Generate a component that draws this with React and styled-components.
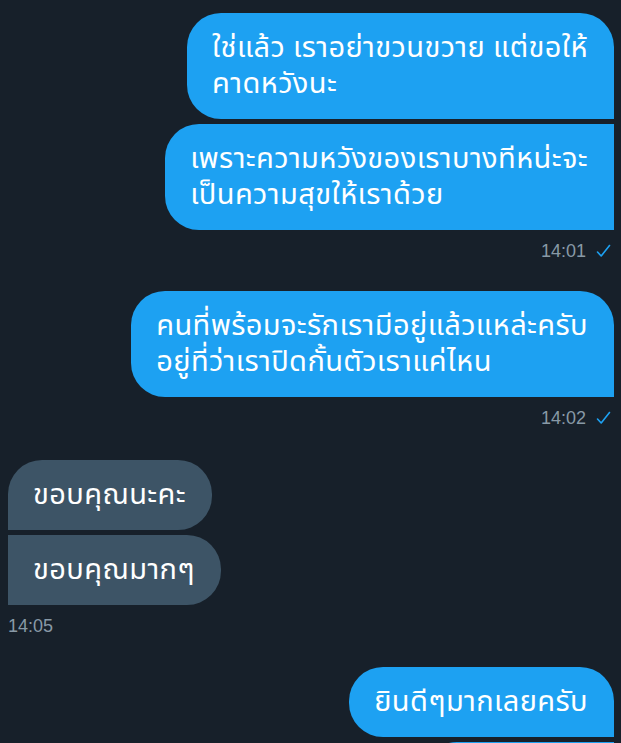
import React from "react";
import styled, { createGlobalStyle } from "styled-components";

const Global = createGlobalStyle`
  html, body { margin: 0; padding: 0; background: #17202a; }
  body { font-family: "Noto Sans Thai", "Noto Sans", "Liberation Sans", sans-serif; }
`;

const Thread = styled.div`
  display: flex;
  flex-direction: column;
  padding: 13px 7px 0 8px;
  height: 743px;
  box-sizing: border-box;
  overflow: hidden;
`;

const Group = styled.div`
  display: flex;
  flex-direction: column;
  align-items: ${(p) => (p.$mine ? "flex-end" : "flex-start")};
  gap: 5px;
  margin-top: ${(p) => p.$mt || 0}px;
`;

const Bubble = styled.div`
  background: ${(p) => (p.$mine ? "#1da1f2" : "#3d5466")};
  color: #ffffff;
  font-size: 29px;
  line-height: 36px;
  letter-spacing: 0.4px;
  padding: 17px 26px 17px 25px;
  white-space: nowrap;
  min-height: ${(p) => (p.$empty ? "36px" : "0")};
  min-width: ${(p) => (p.$empty ? "140px" : "0")};
  border-radius: ${(p) =>
    p.$mine
      ? `34px ${p.$first ? "34px" : "0"} 0 34px`
      : `${p.$first ? "34px" : "0"} 34px 34px 0`};
`;

const Line = styled.div``;

const Stamp = styled.div`
  display: flex;
  align-items: center;
  gap: 10px;
  align-self: ${(p) => (p.$mine ? "flex-end" : "flex-start")};
  margin-top: 4px;
  color: #8899a6;
  font-family: "Liberation Sans", Arial, sans-serif;
  font-size: 18px;
  line-height: 24px;
  padding-right: ${(p) => (p.$mine ? 3 : 0)}px;
`;

const Check = () => (
  <svg width="15" height="14" viewBox="0 0 15 14" fill="none">
    <path d="M1.5 8 L5.2 12 L13.5 1.5" stroke="#1da1f2" strokeWidth="1.6" strokeLinecap="round" strokeLinejoin="round" />
  </svg>
);

export default function App() {
  return (
    <>
      <Global />
      <Thread>
        <Group $mine>
          <Bubble $mine $first>
            <Line>ใช่แล้ว เราอย่าขวนขวาย แต่ขอให้</Line>
            <Line>คาดหวังนะ</Line>
          </Bubble>
          <Bubble $mine>
            <Line>เพราะความหวังของเราบางทีหน่ะจะ</Line>
            <Line>เป็นความสุขให้เราด้วย</Line>
          </Bubble>
          <Stamp $mine>
            14:01 <Check />
          </Stamp>
        </Group>
        <Group $mine $mt={28}>
          <Bubble $mine $first>
            <Line>คนที่พร้อมจะรักเรามีอยู่แล้วแหล่ะครับ</Line>
            <Line>อยู่ที่ว่าเราปิดกั้นตัวเราแค่ไหน</Line>
          </Bubble>
          <Stamp $mine>
            14:02 <Check />
          </Stamp>
        </Group>
        <Group $mt={30}>
          <Bubble $first>
            <Line>ขอบคุณนะคะ</Line>
          </Bubble>
          <Bubble>
            <Line>ขอบคุณมากๆ</Line>
          </Bubble>
          <Stamp>14:05</Stamp>
        </Group>
        <Group $mine $mt={29}>
          <Bubble $mine $first>
            <Line>ยินดีๆมากเลยครับ</Line>
          </Bubble>
          <Bubble $mine $empty />
        </Group>
      </Thread>
    </>
  );
}
